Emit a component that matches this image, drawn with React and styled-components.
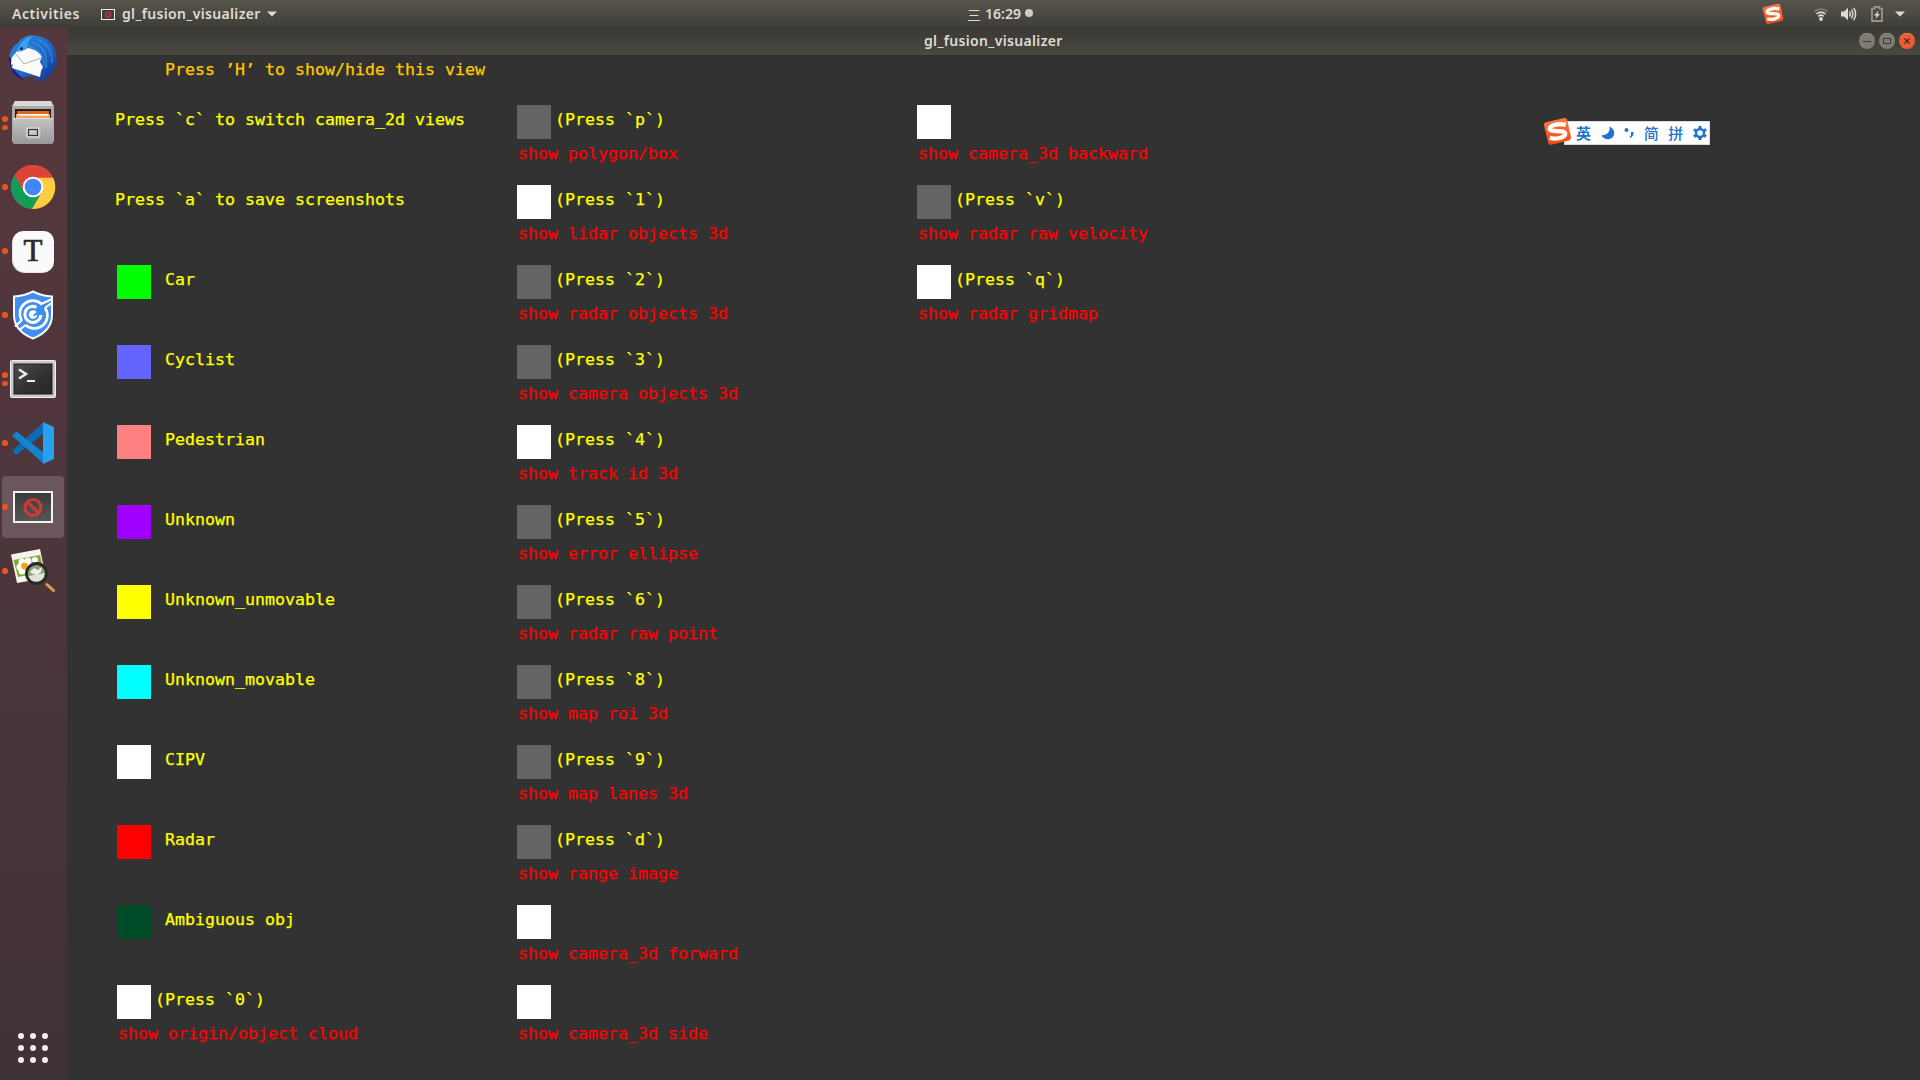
import React from "react";
import styled, { createGlobalStyle } from "styled-components";

const Global = createGlobalStyle`
  html, body, #root { margin: 0; height: 100%; }
  body { overflow: hidden; background: #323232; }
  * { box-sizing: border-box; }
  svg { display: block; flex: none; }
`;

const Screen = styled.div`
  width: 1920px;
  height: 1080px;
  display: flex;
  flex-direction: column;
  font-family: "Noto Sans", "Open Sans", sans-serif;
`;

const TopBar = styled.header`
  height: 28px;
  flex: none;
  display: grid;
  grid-template-columns: 967px auto 1fr;
  align-items: center;
  background: linear-gradient(#57544b, #4b4942 50%, #3d3c37);
  color: #dfdbd2;
  font-size: 14px;
  font-weight: 600;
  line-height: 28px;
`;

const BarLeft = styled.div`
  display: flex;
  align-items: center;
  padding-left: 12px;
`;

const BarText = styled.span`
  width: ${(p) => p.$w}px;
  white-space: nowrap;
  letter-spacing: ${(p) => p.$ls || 0}px;
`;

const AppMenu = styled.div`
  display: flex;
  align-items: center;
  margin-left: 20px;
  gap: 7px;
`;

const Clock = styled.div`
  display: flex;
  align-items: center;
  gap: 4px;
  white-space: nowrap;
`;

const Weekday = styled.span`
  width: 14px;
  font: 400 14px/28px "Noto Sans CJK SC", sans-serif;
`;

const ClockDot = styled.i`
  width: 8px;
  height: 8px;
  border-radius: 50%;
  background: #cfccc4;
  margin-top: -2px;
`;

const Tray = styled.div`
  display: flex;
  justify-content: flex-end;
  align-items: center;
  padding-right: 15px;
`;

const TraySlot = styled.span`
  margin-left: ${(p) => p.$gap}px;
`;

const Body = styled.div`
  flex: 1;
  display: flex;
  min-height: 0;
`;

const Dock = styled.nav`
  width: 67px;
  flex: none;
  display: flex;
  flex-direction: column;
  background: linear-gradient(#55383d, #4f363c 40%, #46343a 70%, #3f3135);
`;

const DockItem = styled.div`
  position: relative;
  height: 62px;
  width: 62px;
  margin: 0 0 2px 2px;
  flex: none;
  border-radius: 4px;
  display: flex;
  align-items: center;
  justify-content: center;
  background: ${(p) => (p.$active ? "#6a565b" : "transparent")};
`;

const Running = styled.div`
  position: absolute;
  left: 0;
  top: 0;
  height: 100%;
  display: flex;
  flex-direction: column;
  justify-content: center;
  gap: 3px;
`;

const Dot = styled.i`
  width: 5.6px;
  height: 5.6px;
  border-radius: 50%;
  background: #e95420;
`;

const Apps = styled.div`
  margin: auto 0 17px 18px;
  display: grid;
  grid-template-columns: repeat(3, 6px);
  gap: 6px;
`;

const AppDot = styled.i`
  width: 6px;
  height: 6px;
  border-radius: 50%;
  background: #f0eeee;
`;

const Window = styled.main`
  flex: 1;
  display: flex;
  flex-direction: column;
  background: #323232;
`;

const TitleBar = styled.div`
  height: 27px;
  flex: none;
  display: grid;
  grid-template-columns: 1fr auto 1fr;
  align-items: center;
  padding-bottom: 2px;
  background: linear-gradient(#3a3934, #4a4841);
  color: #dfdbd2;
  font-size: 14px;
  font-weight: 600;
  line-height: 25px;
`;

const Controls = styled.div`
  display: flex;
  justify-content: flex-end;
  gap: 4px;
  padding-right: 5px;
`;

const Canvas = styled.section`
  font-family: "DejaVu Sans Mono", monospace;
  font-size: 15px;
  line-height: 18px;
  color: #ffff00;
  white-space: pre;
`;

/* Stretches the glyphs so that one character cell is exactly 10px wide. */
const Glyphs = styled.span`
  display: inline-block;
  transform: scaleX(1.1074);
  transform-origin: 0 0;
  -webkit-text-stroke: 0.25px currentColor;
`;

const Hint = styled.p`
  margin: 0;
  padding: 6px 0 0 98.4px;
  height: 50px;
  color: #ffc800;
`;

const Columns = styled.div`
  display: grid;
  grid-template-columns: repeat(3, 400px);
  padding-left: 50px;
`;

const Cell = styled.div`
  height: 80px;
`;

const Line = styled.div`
  height: 34px;
  display: flex;
  align-items: flex-start;
`;

const Swatch = styled.i`
  width: 34px;
  height: 34px;
  background: ${(p) => p.$c};
`;

const Label = styled.span`
  padding-top: 6px;
  margin-left: ${(p) => p.$gap}px;
`;

const Caption = styled.div`
  margin-left: 0.5px;
  padding-top: 6px;
  color: #ff0000;
`;

const ImeBar = styled.div`
  position: absolute;
  left: 1543px;
  top: 117px;
  display: flex;
  align-items: center;
`;

const ImeStrip = styled.div`
  width: 146px;
  height: 24px;
  margin-left: -8px;
  margin-top: 3px;
  padding: 0 2px 0 11px;
  display: flex;
  align-items: center;
  justify-content: space-between;
  background: #fff;
  border: 1px solid #d5dbe2;
  color: #1c74cc;
  font: 500 15px/20px "Noto Sans CJK SC", sans-serif;
`;

const Mode = styled.b`
  font-weight: 700;
`;

const ImeBadge = styled.div`
  z-index: 1;
`;

const Sogou = ({ size }) => (
  <svg width={size} height={size} viewBox="0 0 30 30">
    <defs>
      <linearGradient id="sg" x1="0" y1="0" x2="0" y2="1">
        <stop offset="0" stopColor="#ff7a45" />
        <stop offset="1" stopColor="#f04a10" />
      </linearGradient>
    </defs>
    <path d="M3 5.5 L22 1 Q24.5 .6 25 3 L29 21 Q29.4 23.6 27 24.3 L8.500 28.800 Q6 29.200 5.500 26.800 L1 8.500 Q.6 6 3 5.500Z" fill="url(#sg)" />
    <path d="M23.500 8.200 C17 6.500 7.500 8 7 12 C6.700 16.500 22.500 12.500 23 17 C23 21.500 13 23.500 7 21.500" fill="none" stroke="#fff" strokeWidth="4.400" />
  </svg>
);

const Thunderbird = () => (
  <svg width="50" height="50" viewBox="0 0 50 50">
    <defs>
      <linearGradient id="tb" x1="0" y1="0" x2="1" y2="1">
        <stop offset="0" stopColor="#2f86dd" />
        <stop offset=".55" stopColor="#1c6ac8" />
        <stop offset="1" stopColor="#152a86" />
      </linearGradient>
    </defs>
    <path d="M10 9 C14 2 23 0 30 2 C42 4 49 14 48.500 26 C48 37 41 45 30 48 L34 44 L26 47 L29 42 L14 43 L16 47 C6 42 0 33 1 23 C2 17 5 12 10 9Z" fill="url(#tb)" />
    <path d="M1 22 L4 26 L3 33 L8 38 L14 44 L17 47 C6 43 0 33 1 22Z" fill="#23157a" />
    <path d="M9 17 L20 14 Q28 15 34 22 L32 28 L35 33 L33 37 L32 43 L4 34 L5 30 L3 31 L3.500 24Z" fill="#fbfbfb" />
    <path d="M7 19 L16 30 L34 23.500" fill="none" stroke="#b0b0b0" strokeWidth="1" />
    <path d="M9 18 C10 11 17 3 25 2 C19 7 20 11 19 14.500 C16 17 13 17.500 9 18Z" fill="#3fa0ee" />
    <path d="M29 5 C39 9 45 18 44 29 M24 8 C35 12 40 21 38 34 M20 12 C30 14 36 22 36 32" fill="none" stroke="#3a9ae8" strokeWidth="1.600" opacity=".6" />
    <circle cx="13.500" cy="14.500" r="1.600" fill="#162a50" />
  </svg>
);

const Files = () => (
  <svg width="44" height="46" viewBox="0 0 44 46">
    <defs>
      <linearGradient id="fl" x1="0" y1="0" x2="0" y2="1">
        <stop offset="0" stopColor="#c4c4c4" />
        <stop offset="1" stopColor="#989898" />
      </linearGradient>
    </defs>
    <path d="M4 1 H40 L43 6 V41 Q43 42 42 42 H2 Q1 42 1 41 V6Z" fill="#aaa" />
    <path d="M4 1 H40 L42 6 H2Z" fill="#d8d8d8" />
    <rect x="4" y="9" width="36" height="11" fill="#211f1f" />
    <rect x="6" y="11" width="32" height="8" fill="#df6524" />
    <rect x="5" y="14" width="34" height="5" fill="#f5a65c" />
    <rect x="7" y="14" width="30" height="1.500" fill="#fff" />
    <path d="M2 18 H42 V43 Q42 44 41 44 H3 Q2 44 2 43Z" fill="url(#fl)" />
    <rect x="2" y="18" width="40" height="1" fill="#ddd" />
    <rect x="15" y="27" width="14" height="11" rx="2" fill="#dedede" stroke="#bbb" />
    <rect x="17.500" y="29.500" width="9" height="6" fill="#ccc" stroke="#333" strokeWidth="1.300" />
  </svg>
);

const Chrome = () => (
  <svg width="46" height="46" viewBox="0 0 48 48">
    <circle cx="24" cy="24" r="23" fill="#dd4437" />
    <path d="M5 11.500 A23 23 0 0 0 23 47 L33 29 L24 24 L14.500 28Z" fill="#109d58" />
    <path d="M44.900 14 A23 23 0 0 1 23 47 L34 28 L24 14Z" fill="#ffcd40" />
    <path d="M5 11.500 A23 23 0 0 1 44.900 14 H24 L14 28Z" fill="#dd4437" />
    <circle cx="24" cy="24" r="10.800" fill="#fff" />
    <circle cx="24" cy="24" r="8.700" fill="#4285f4" />
  </svg>
);

const TyporaTile = styled.div`
  width: 41px;
  height: 41px;
  border-radius: 10px 10px 10px 13px;
  background: #fafafa;
  box-shadow: -1px 1px 0 #e4e2e2;
  color: #2b2b2b;
  font: 31px/40px "Liberation Serif", serif;
  text-align: center;
  -webkit-text-stroke: 0.7px #2b2b2b;
`;

const Shield = () => (
  <svg width="42" height="50" viewBox="0 0 42 50">
    <path d="M21 1.500 Q30 6 40 6.500 V25 Q40 41 21 48.500 Q2 41 2 25 V6.500 Q12 6 21 1.500Z" fill="#3f8ef0" stroke="#f7f9fc" strokeWidth="2" />
    <path d="M29 13.500 A13 13 0 0 0 9.500 30 M13.500 35 A13 13 0 0 0 33 18" fill="none" stroke="#fff" strokeWidth="2.600" />
    <path d="M24.500 17.300 A8 8 0 1 0 28.800 25" fill="none" stroke="#fff" strokeWidth="3" />
    <circle cx="21" cy="24.500" r="4.300" fill="#fff" />
    <path d="M28 14.500 L39 9.500 M3 36.500 L10 30 M13.500 35 L8 39.500 M33 18 L39.500 13" stroke="#fff" strokeWidth="2.200" fill="none" />
    <path d="M20.500 25.500 L30 17.500 L30.500 21.500 L23 26Z" fill="#3f8ef0" />
  </svg>
);

const Terminal = () => (
  <svg width="46" height="38" viewBox="0 0 46 38">
    <defs>
      <linearGradient id="tm" x1="0" y1="0" x2="1" y2="1">
        <stop offset="0" stopColor="#4c4e4c" />
        <stop offset=".5" stopColor="#343434" />
        <stop offset="1" stopColor="#262626" />
      </linearGradient>
    </defs>
    <rect x=".5" y=".5" width="45" height="37" rx="1" fill="#c9c9c9" stroke="#eee" />
    <rect x="4" y="4" width="38" height="30" fill="url(#tm)" stroke="#1d1d1d" />
    <path d="M9 9.500 L16 14 L9 18.500" fill="none" stroke="#eee" strokeWidth="2.500" />
    <path d="M17 21 H25" stroke="#eee" strokeWidth="2" />
  </svg>
);

const VSCode = () => (
  <svg width="44" height="44" viewBox="0 0 44 44">
    <path d="M1 30 L5.500 34 L33 12 V1 Z" fill="#0a6db5" />
    <path d="M1 14.500 L5.500 10.500 L33 32 V43Z" fill="#1284d0" />
    <path d="M32 1 L43 6 V38 L32 43Z" fill="#27a0ee" />
  </svg>
);

const GlApp = () => (
  <svg width="40" height="32" viewBox="0 0 40 32">
    <defs>
      <linearGradient id="gl" x1="0" y1="0" x2="0" y2="1">
        <stop offset="0" stopColor="#3a3a3a" />
        <stop offset="1" stopColor="#565656" />
      </linearGradient>
    </defs>
    <rect x="1" y="1" width="38" height="30" fill="url(#gl)" stroke="#f3f3f3" strokeWidth="2" />
    <circle cx="20" cy="16.500" r="8" fill="none" stroke="#cc3a36" strokeWidth="3.200" />
    <path d="M14.500 11 L25.500 22" stroke="#cc3a36" strokeWidth="3.200" />
  </svg>
);

const Viewer = () => (
  <svg width="46" height="46" viewBox="0 0 46 46">
    <path d="M1 6.500 L30 1 L36 30 L7 35Z" fill="#f4f5ee" />
    <path d="M3.500 12 L30 7 L34 24 L8 29Z" fill="#7ea93a" />
    <g fill="#fff">
      <circle cx="10" cy="19" r="3.500" /><circle cx="12" cy="14" r="3.500" /><circle cx="18" cy="13" r="3.500" />
      <circle cx="20" cy="18" r="3.500" /><circle cx="12" cy="23" r="3.500" /><circle cx="25" cy="12" r="3" />
    </g>
    <circle cx="14.500" cy="18" r="3.400" fill="#f2a712" />
    <path d="M34 34 L44 43" stroke="#4b4237" strokeWidth="4" strokeLinecap="round" />
    <path d="M37 36.500 L43.500 42.500" stroke="#dda04c" strokeWidth="3" strokeLinecap="round" />
    <circle cx="26.500" cy="25.500" r="10" fill="#8f9e78" stroke="#26282a" strokeWidth="2.800" />
    <path d="M18.500 28 L34.500 25 Q34 33 26.500 33.500 Q20 33.500 18.500 28Z" fill="#dfe3da" />
    <path d="M20 24 L24 20 L28 22 L32 19 L31 24 L27 27 L23 26Z" fill="#fff" opacity=".85" />
  </svg>
);

const GlSmall = () => (
  <svg width="14" height="11" viewBox="0 0 14 11">
    <rect x=".5" y=".5" width="13" height="10" fill="#3d3d3d" stroke="#eee" />
    <circle cx="7" cy="5.500" r="2.600" fill="none" stroke="#cf3030" strokeWidth="1.300" />
    <path d="M5.200 3.700 L8.800 7.300" stroke="#cf3030" />
  </svg>
);

const Caret = () => (
  <svg width="10" height="6" viewBox="0 0 10 6"><path d="M0 .5 H10 L5 5.500Z" fill="#dfdbd2" /></svg>
);

const Wifi = () => (
  <svg width="14" height="13" viewBox="0 0 14 13" fill="none" strokeWidth="1.600">
    <path d="M.5 3.500 Q7 -1.500 13.500 3.500" stroke="#85827a" />
    <path d="M2.500 6 Q7 2.300 11.500 6" stroke="#dfdbd2" />
    <path d="M4.300 8.300 Q7 6 9.700 8.300" stroke="#dfdbd2" />
    <circle cx="7" cy="11" r="1.900" fill="#dfdbd2" />
  </svg>
);

const Volume = () => (
  <svg width="16" height="14" viewBox="0 0 16 14" fill="none" stroke="#dfdbd2" strokeWidth="1.500">
    <path d="M0 4.500 H3 L7 .8 V13.200 L3 9.500 H0Z" fill="#dfdbd2" stroke="none" />
    <path d="M8.500 4.500 Q10 7 8.500 9.500 M10.500 2.500 Q13 7 10.500 11.500 M12.700 .8 Q16.500 7 12.700 13.200" />
  </svg>
);

const Battery = () => (
  <svg width="12" height="16" viewBox="0 0 12 16">
    <path d="M1 2.700 H3.500 V1 H8.500 V2.700 H11 V15 H1Z" fill="none" stroke="#96938b" strokeWidth="1.800" />
    <path d="M7.500 4.500 L3 9.500 H5.500 L4.500 13 L9 8 H6.500Z" fill="#dfdbd2" />
  </svg>
);

const WinButton = ({ kind }) => {
  const close = kind === "close";
  return (
    <svg width="16" height="16" viewBox="0 0 16 16">
      <circle cx="8" cy="8" r="8" fill={close ? "#ea5d33" : "#7d7b74"} />
      <path d="M1.200 4.500 A7.600 7.600 0 0 1 14.800 4.500" fill="none" stroke={close ? "#f58e6b" : "#94928b"} strokeWidth=".8" />
      {kind === "min" && <path d="M4 8.500 H12" stroke="#3c3b37" />}
      {kind === "max" && <rect x="4.500" y="5.500" width="7" height="5" fill="none" stroke="#3c3b37" />}
      {close && <path d="M5.500 5.500 L10.500 10.500 M10.500 5.500 L5.500 10.500" stroke="#3c2a22" strokeWidth="1.200" />}
    </svg>
  );
};

const Moon = () => (
  <svg width="14" height="14" viewBox="0 0 14 14"><path d="M8.500 .5 Q10 8 .5 9.500 Q3 13.500 7.500 13.300 Q13 12.500 13.300 7 Q13 2.500 8.500 .5Z" fill="#1c74cc" /></svg>
);

const Punct = () => (
  <svg width="10" height="12" viewBox="0 0 10 12" fill="#1c74cc">
    <circle cx="2.500" cy="3" r="2" />
    <path d="M7 5 H9.500 Q10 9.500 6 11 L5.500 10 Q7.500 9 7 5Z" />
  </svg>
);

const Gear = () => (
  <svg width="14" height="14" viewBox="0 0 14 14" fill="none" stroke="#1c74cc">
    <circle cx="7" cy="7" r="4" strokeWidth="2.400" />
    <path d="M7 0 V2.500 M7 11.500 V14 M.9 3.500 L3 4.700 M11 9.300 L13.100 10.500 M.9 10.500 L3 9.300 M11 4.700 L13.100 3.500" strokeWidth="3" />
  </svg>
);

const dockItems = [
  { icon: <Thunderbird />, dots: 0 },
  { icon: <Files />, dots: 2 },
  { icon: <Chrome />, dots: 1 },
  { icon: <TyporaTile>T</TyporaTile>, dots: 1 },
  { icon: <Shield />, dots: 1 },
  { icon: <Terminal />, dots: 2 },
  { icon: <VSCode />, dots: 1 },
  { icon: <GlApp />, dots: 1, active: true },
  { icon: <Viewer />, dots: 1 },
];

const ON = "#ffffff";
const OFF = "#646464";
const toggle = (on, key, caption) => ({ color: on ? ON : OFF, press: key, caption });

const columns = [
  [
    { text: "Press `c` to switch camera_2d views" },
    { text: "Press `a` to save screenshots" },
    { color: "#00ff00", name: "Car" },
    { color: "#6464ff", name: "Cyclist" },
    { color: "#ff8080", name: "Pedestrian" },
    { color: "#a000ff", name: "Unknown" },
    { color: "#ffff00", name: "Unknown_unmovable" },
    { color: "#00ffff", name: "Unknown_movable" },
    { color: "#ffffff", name: "CIPV" },
    { color: "#ff0000", name: "Radar" },
    { color: "#004b28", name: "Ambiguous obj" },
    toggle(true, "0", "show origin/object cloud"),
  ],
  [
    toggle(false, "p", "show polygon/box"),
    toggle(true, "1", "show lidar objects 3d"),
    toggle(false, "2", "show radar objects 3d"),
    toggle(false, "3", "show camera objects 3d"),
    toggle(true, "4", "show track id 3d"),
    toggle(false, "5", "show error ellipse"),
    toggle(false, "6", "show radar raw point"),
    toggle(false, "8", "show map roi 3d"),
    toggle(false, "9", "show map lanes 3d"),
    toggle(false, "d", "show range image"),
    toggle(true, null, "show camera_3d forward"),
    toggle(true, null, "show camera_3d side"),
  ],
  [
    toggle(true, null, "show camera_3d backward"),
    toggle(false, "v", "show radar raw velocity"),
    toggle(true, "q", "show radar gridmap"),
  ],
];

const Entry = ({ item }) => (
  <Cell>
    <Line>
      {item.color && <Swatch $c={item.color} />}
      {item.text && <Label $gap={-1.6}><Glyphs>{item.text}</Glyphs></Label>}
      {item.name && <Label $gap={14}><Glyphs>{item.name}</Glyphs></Label>}
      {item.press && <Label $gap={4}><Glyphs>{"(Press `" + item.press + "`)"}</Glyphs></Label>}
    </Line>
    {item.caption && <Caption><Glyphs>{item.caption}</Glyphs></Caption>}
  </Cell>
);

export default function App() {
  return (
    <>
      <Global />
      <Screen>
        <TopBar>
          <BarLeft>
            <BarText $w={69} $ls={0.55}>Activities</BarText>
            <AppMenu>
              <GlSmall />
              <BarText $w={138} $ls={0.35}>gl_fusion_visualizer</BarText>
              <Caret />
            </AppMenu>
          </BarLeft>
          <Clock><Weekday>三</Weekday><span>16:29</span><ClockDot /></Clock>
          <Tray>
            <Sogou size={22} />
            <TraySlot $gap={30}><Wifi /></TraySlot>
            <TraySlot $gap={13}><Volume /></TraySlot>
            <TraySlot $gap={14}><Battery /></TraySlot>
            <TraySlot $gap={12}><Caret /></TraySlot>
          </Tray>
        </TopBar>
        <Body>
          <Dock>
            {dockItems.map((d, i) => (
              <DockItem key={i} $active={d.active}>
                <Running>{Array.from({ length: d.dots }, (_, k) => <Dot key={k} />)}</Running>
                {d.icon}
              </DockItem>
            ))}
            <Apps>{Array.from({ length: 9 }, (_, k) => <AppDot key={k} />)}</Apps>
          </Dock>
          <Window>
            <TitleBar>
              <span />
              <BarText $w={139} $ls={0.35}>gl_fusion_visualizer</BarText>
              <Controls>
                <WinButton kind="min" />
                <WinButton kind="max" />
                <WinButton kind="close" />
              </Controls>
            </TitleBar>
            <Canvas>
              <Hint><Glyphs>Press ’H’ to show/hide this view</Glyphs></Hint>
              <Columns>
                {columns.map((col, i) => (
                  <div key={i}>{col.map((item, k) => <Entry key={k} item={item} />)}</div>
                ))}
              </Columns>
            </Canvas>
          </Window>
        </Body>
      </Screen>
      <ImeBar>
        <ImeBadge><Sogou size={29} /></ImeBadge>
        <ImeStrip>
          <Mode>英</Mode>
          <Moon />
          <Punct />
          <span>简</span>
          <span>拼</span>
          <Gear />
        </ImeStrip>
      </ImeBar>
    </>
  );
}
